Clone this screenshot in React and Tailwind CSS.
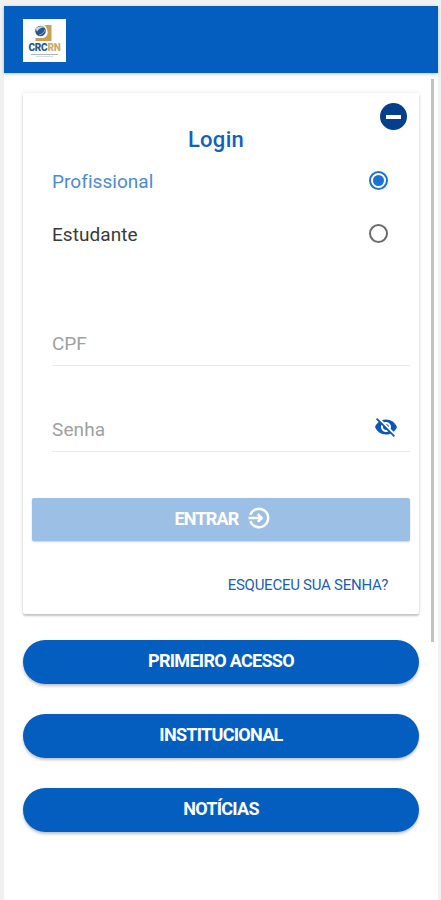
import React, { useState } from 'react';
import clsx from 'clsx';

const profiles = [
  { id: 'profissional', label: 'Profissional' },
  { id: 'estudante',    label: 'Estudante'    },
];

const links = ['PRIMEIRO ACESSO', 'INSTITUCIONAL', 'NOTÍCIAS'];

const Logo = () => (
  <div className="w-[43px] h-[43px] bg-white flex flex-col items-center pt-[5px]">
    <svg width="22" height="18" viewBox="0 0 22 18" className="-ml-[3px]">
      <path d="M12.500 1h7v16H3.500v-3h7c4-.5 5.500-3.500 5-6.500C15 4.500 14 2.500 12.500 1z" fill="#c9a152" />
      <circle cx="8.500" cy="7" r="5.300" fill="#2a5788" />
      <path d="M3.500 5C5.500 2 10 1.200 12.500 3.500 10 3 7 4 5.200 7.500z" fill="#c4d6e6" />
      <path d="M7 11c3-.5 5-2.500 6-5.500" stroke="#8fabc6" strokeWidth="1" fill="none" />
    </svg>
    <div className="font-['Roboto'] font-black text-[10px] leading-[12px] tracking-[-0.2px] text-[#2c5a88]">
      CRC<span className="text-[#cbab6e]">RN</span>
    </div>
    <div className="w-[27px] h-[1px] bg-[#a9b9c6]" />
    <div className="mt-[1px] w-[17px] h-[1px] bg-[#d5dce2]" />
  </div>
);

const EyeOff = () => (
  <svg width="24" height="24" viewBox="0 0 24 24" fill="#0b56bb">
    <path d="M12 7c2.760 0 5 2.240 5 5 0 .65-.13 1.260-.36 1.830l2.920 2.920c1.510-1.260 2.700-2.890 3.430-4.750-1.730-4.390-6-7.500-11-7.500-1.400 0-2.740.25-3.980.7l2.160 2.160C10.740 7.130 11.350 7 12 7zM2 4.270l2.280 2.280.46.46C3.080 8.300 1.780 10.020 1 12c1.730 4.390 6 7.500 11 7.500 1.550 0 3.030-.3 4.380-.84l.42.42L19.730 22 21 20.730 3.270 3 2 4.270zM7.530 9.800l1.550 1.550c-.05.21-.08.43-.08.65 0 1.660 1.340 3 3 3 .22 0 .44-.03.65-.08l1.550 1.550c-.67.33-1.410.53-2.200.53-2.760 0-5-2.240-5-5 0-.79.2-1.530.53-2.200zm4.310-.78l3.150 3.150.02-.16c0-1.660-1.340-3-3-3l-.17.01z" />
  </svg>
);

const EnterIcon = () => (
  <svg
    width="22" height="22" viewBox="0 0 22 22"
    fill="none" stroke="#fff" strokeWidth="2.500"
  >
    <path d="M2.300 7.900a9.200 9.200 0 1 1 0 6.200" />
    <path d="M0.500 11H14M9.800 7.100l3.900 3.900-3.900 3.900" />
  </svg>
);

const App = () => {
  const [profile, setProfile] = useState('profissional');
  const [showPassword, setShowPassword] = useState(false);

  return (
    <div className="h-[900px] bg-[#f1f1f1] pl-1 pr-[3px] pt-[6px] font-['Roboto',sans-serif]">
      <div className="relative h-full bg-white">
        <header className="h-[67px] bg-[#045ebf] pl-[19px] pt-[1px] flex items-center shadow-[0_1px_3px_rgba(0,0,0,0.25)]">
          <Logo />
        </header>

        {/* Scroll thumb */}
        <div className="absolute right-[4px] top-[73px] w-[3px] h-[563px] bg-[#c1c1c1]" />

        <main className="pl-[19px] pr-[19px] pt-5">
          <section className="relative h-[521px] rounded-[2px] bg-white pt-[32px] shadow-[0_2px_2px_rgba(0,0,0,0.2),0_0_4px_rgba(0,0,0,0.12)]">
            <button
              aria-label="Fechar"
              className="absolute right-[12px] top-[10px] w-[27px] h-[27px] rounded-full bg-[#043f8c] flex items-center justify-center"
            >
              <span className="w-[15px] h-[4px] bg-white" />
            </button>

            <h1 className="text-center pr-[10px] text-[22px] leading-[30px] font-medium tracking-[0.3px] text-[#1460bd]">
              Login
            </h1>

            <div className="pl-[29px] pr-[31px]">
              {profiles.map((item) => (
                <button
                  key={item.id}
                  onClick={() => setProfile(item.id)}
                  className={clsx(
                    'w-full h-[53px] pb-[3px] flex items-center justify-between text-[19px] tracking-[0.05px]',
                    profile === item.id ? 'text-[#4a8bd6]' : 'text-[#3a3a3a]'
                  )}
                >
                  <span className="pt-[4px]">{item.label}</span>
                  <span
                    className={clsx(
                      'w-[19px] h-[19px] rounded-full border-2 flex items-center justify-center',
                      profile === item.id ? 'border-[#1a73d2]' : 'border-[#6c6c6c]'
                    )}
                  >
                    {profile === item.id && <span className="w-[11px] h-[11px] rounded-full bg-[#1a73d2]" />}
                  </span>
                </button>
              ))}
            </div>

            <div className="pl-[29px] pr-[9px] pt-[61px]">
              <div className="h-[44px] border-b border-[#e9e9e9]">
                <input
                  placeholder="CPF"
                  className="w-full h-[42px] text-[19px] outline-none placeholder:text-[#a0a0a0]"
                />
              </div>
              <div className="mt-[42px] h-[44px] border-b border-[#e9e9e9] flex pr-[12px]">
                <input
                  type={showPassword ? 'text' : 'password'}
                  placeholder="Senha"
                  className="min-w-0 flex-1 h-[42px] text-[19px] tracking-[0.1px] outline-none placeholder:text-[#a0a0a0]"
                />
                <button aria-label="Mostrar senha" onClick={() => setShowPassword(!showPassword)} className="h-[38px]">
                  <EyeOff />
                </button>
              </div>
            </div>

            <div className="pl-[9px] pr-[9px] pt-[46px]">
              <button className="w-full h-[43px] rounded-[2px] bg-[#9bbfe5] flex items-center justify-center gap-[9px] pl-[2px] pb-[3px] text-white text-[18px] font-bold tracking-[-0.8px] shadow-[0_1px_2px_rgba(0,0,0,0.2)]">
                ENTRAR
                <EnterIcon />
              </button>
            </div>

            <div className="pr-[31px] pt-[32px] text-right">
              <a className="text-[15px] leading-5 tracking-[-0.25px] text-[#1a5fb8]">ESQUECEU SUA SENHA?</a>
            </div>
          </section>

          <nav className="pt-[26px] flex flex-col gap-[30px]">
            {links.map((label) => (
              <button
                key={label}
                className="h-[44px] rounded-full bg-[#045ebf] pb-[3px] text-white text-[18px] font-bold tracking-[-0.7px] shadow-[0_2px_3px_rgba(0,0,0,0.25)]"
              >
                {label}
              </button>
            ))}
          </nav>
        </main>
      </div>
    </div>
  );
};

export default App;
